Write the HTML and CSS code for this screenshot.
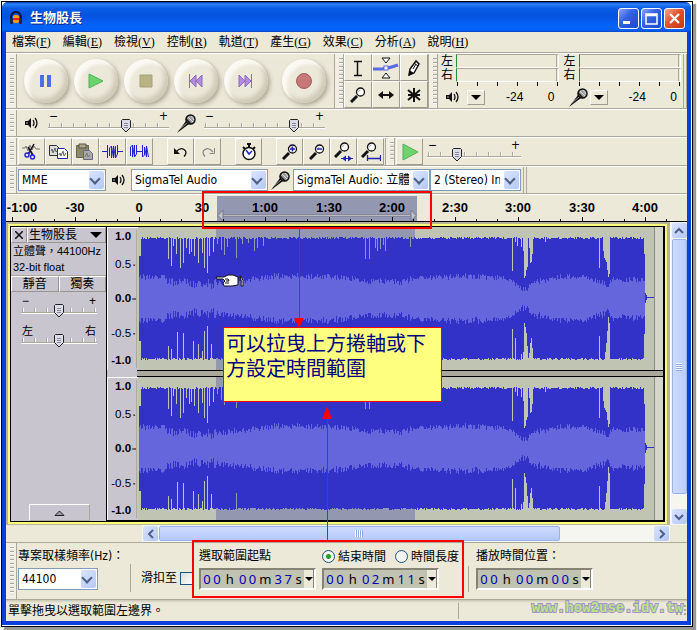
FILE: index.html
```html
<!DOCTYPE html>
<html lang="zh-Hant">
<head>
<meta charset="utf-8">
<title>生物股長</title>
<link rel="stylesheet" href="styles.css">
</head>
<body>
<svg class="sprite" aria-hidden="true">
  <symbol id="i-speaker" viewBox="0 0 14 12"><path d="M0 4h3l3-3v10l-3-3H0z" fill="#111"/><path d="M2 5v2" stroke="#aaa"/><path d="M8 3q2 3 0 6M10 1q4 5 0 10" fill="none" stroke="#111" stroke-width="1.3"/></symbol>
  <symbol id="i-mic" viewBox="0 0 19 19"><path d="M0 19L9 7l3 3z" fill="#111"/><path d="M3 15l7-6" stroke="#999"/><circle cx="13.500" cy="5.500" r="4.500" fill="#999" stroke="#111" stroke-width="1.500"/><path d="M11 3l5 5M14 2l3 4M10 6l4 4" stroke="#ddd"/><path d="M9 5l5 5" stroke="#111" stroke-width="1.500"/></symbol>
  <symbol id="i-lens" viewBox="0 0 16 16"><path d="M1 15l6-6" stroke="#111" stroke-width="3"/><circle cx="10.500" cy="5" r="4" fill="#fff" stroke="#111" stroke-width="1.300"/><path d="M8.500 5q0-2 2-2" stroke="#aaa" fill="none"/></symbol>
</svg>
<div class="window">
<div class="frame">
  <header class="titlebar">
    <svg width="14" height="14" viewBox="0 0 14 14"><path d="M2 8V6q1-5 5-5t5 5v2" fill="none" stroke="#113" stroke-width="2"/><rect x="4" y="4" width="6" height="8" rx="2" fill="#f90"/><path d="M4 8h6" stroke="#d22" stroke-width="2"/><rect x="1" y="7" width="3" height="6" rx="1" fill="#224"/><rect x="10" y="7" width="3" height="6" rx="1" fill="#224"/></svg>
    <h1>生物股長</h1>
    <button class="caption" aria-label="Minimize"><svg width="19" height="19"><path d="M4 13.500h7" stroke="#fff" stroke-width="3"/></svg></button>
    <button class="caption" aria-label="Maximize"><svg width="19" height="19"><path d="M4 5h11v10H4zM4 6.500h11" stroke="#fff" fill="none" stroke-width="1.500"/></svg></button>
    <button class="caption close" aria-label="Close"><svg width="19" height="19"><path d="M5 5l9 9M14 5l-9 9" stroke="#fff" stroke-width="2.200"/></svg></button>
  </header>

  <nav class="menubar">
    <button>檔案<span>(<u>F</u>)</span></button><button>編輯<span>(<u>E</u>)</span></button><button>檢視<span>(<u>V</u>)</span></button><button>控制<span>(<u>R</u>)</span></button><button>軌道<span>(<u>T</u>)</span></button><button>產生<span>(<u>G</u>)</span></button><button>效果<span>(<u>C</u>)</span></button><button>分析<span>(<u>A</u>)</span></button><button>說明<span>(<u>H</u>)</span></button>
  </nav>

  <section class="bar tall">
    <i class="grip"></i>
    <div class="transport">
      <button aria-label="Pause"><svg width="16" height="16"><path d="M2 2h4v12H2zM9 2h4v12H9z" fill="#4a6fe8"/></svg></button>
      <button aria-label="Play"><svg width="16" height="16"><path d="M1 1l14 7-14 7z" fill="#6bd56b" stroke="#54ad5c"/></svg></button>
      <button aria-label="Stop"><svg width="16" height="16"><path d="M2 2h12v12H2z" fill="#b9b282" stroke="#a8a27a"/></svg></button>
      <button aria-label="Start"><svg width="16" height="16"><path d="M1.500 1v14M8 2L2 8l6 6zM14 2L8 8l6 6z" fill="#b48ae0" stroke="#8c6bb8"/></svg></button>
      <button aria-label="End"><svg width="16" height="16"><path d="M13.500 1v14M1 2l6 6-6 6zM7 2l6 6-6 6z" fill="#b48ae0" stroke="#8c6bb8"/></svg></button>
      <button class="record" aria-label="Record"><svg width="16" height="16"><circle cx="8" cy="8" r="7.500" fill="#c87878" stroke="#a55c5c"/></svg></button>
    </div>
    <i class="grip"></i>
    <div class="tools">
      <button aria-label="Selection"><svg width="18" height="18"><path d="M5 2.500h3.500v14H5M13 2.500H9M13 16.500H9" fill="none" stroke="#111" stroke-width="1.500"/></svg></button>
      <button aria-label="Envelope"><svg width="26" height="22"><path d="M0 12h9q8-1 16-4" stroke="#5a6ae0" stroke-width="3" fill="none"/><path d="M9 1h8l-4 5zM9 21h8l-4-5z" fill="#fff" stroke="#111"/><rect x="11" y="9" width="4" height="4" fill="#fff" stroke="#5a6ae0"/></svg></button>
      <button aria-label="Draw"><svg width="18" height="18"><path d="M4 16l1-6 6-8 3 3-5 9z" fill="#fff" stroke="#111" stroke-width="1.500"/><path d="M4 16l1-4 3 2zM9 4l4 3M8 10l3-5" stroke="#111"/></svg></button>
      <button aria-label="Zoom"><svg width="16" height="16"><use href="#i-lens"/></svg></button>
      <button aria-label="Time shift"><svg width="18" height="16"><path d="M3 8h12" stroke="#111" stroke-width="2"/><path d="M1 8l5-4v8zM17 8l-5-4v8z" fill="#111"/></svg></button>
      <button aria-label="Multi"><svg width="18" height="16"><path d="M9 1v14M3 3l12 10M15 3L3 13M3 8h12" stroke="#111" stroke-width="2"/></svg></button>
    </div>
    <i class="grip"></i>
    <div class="meters">
      <div class="meter play">
        <span>左</span><div class="level"></div><span>右</span><div class="level"></div>
        <div class="ticks"></div>
        <div class="scale"><svg width="14" height="12"><use href="#i-speaker"/></svg><button class="drop" aria-label="Playback meter"></button><b>-24</b><b>0</b></div>
      </div>
      <div class="meter rec">
        <span>左</span><div class="level"></div><span>右</span><div class="level"></div>
        <div class="ticks"></div>
        <div class="scale"><svg width="19" height="19"><use href="#i-mic"/></svg><button class="drop" aria-label="Record meter"></button><b>-24</b><b>0</b></div>
      </div>
    </div>
    <i class="endgrip"></i>
  </section>

  <section class="bar mixer">
    <i class="grip"></i>
    <svg class="spk" width="14" height="12"><use href="#i-speaker"/></svg>
    <label class="slider"><span><b>−</b><b>+</b></span><input type="range" value="66" aria-label="Output volume"></label>
    <svg class="mic" width="19" height="19"><use href="#i-mic"/></svg>
    <label class="slider"><span><b>−</b><b>+</b></span><input type="range" value="77" aria-label="Input volume"></label>
  </section>

  <section class="bar edit">
    <i class="grip"></i>
    <div class="group">
      <button aria-label="Cut"><svg width="21" height="18"><path d="M1 5h3l1-2 2 5 2-6 2 5 2-4 2 3h4" stroke="#777" fill="none"/><path d="M13 1L8 10M7 4l5 8" stroke="#111" stroke-width="1.500"/><path d="M9 9l-2 2M11 11v1" stroke="#22c" stroke-width="2"/><circle cx="6" cy="12" r="2" fill="none" stroke="#22c" stroke-width="1.400"/><circle cx="11.500" cy="14" r="2" fill="none" stroke="#22c" stroke-width="1.400"/></svg></button>
      <button aria-label="Copy"><svg width="21" height="18"><path d="M1.500 2.500h7l3 3v7h-10z" fill="#ddd" stroke="#333"/><path d="M3 8l1-2 1 4 2-5 1 4 2-2" stroke="#666" fill="none"/><path d="M9.500 5.500h7l3 3v7h-10z" fill="#fff" stroke="#22a"/><path d="M11 12l1-2 1 3 2-5 1 5 2-3" stroke="#666" fill="none"/></svg></button>
      <button aria-label="Paste"><svg width="21" height="18"><path d="M1.500 2.500h12v12h-12z" fill="#8a8a68" stroke="#666650"/><path d="M4 1h7v4H4z" fill="#aaa98c" stroke="#555"/><path d="M8.500 7.500h6l3 3v6h-9z" fill="#aaa" stroke="#66668a"/><path d="M10 14l2-4 1 4 2-2" stroke="#777" fill="none"/></svg></button>
      <button aria-label="Trim"><svg width="21" height="18"><path d="M0 8.500h5M16 8.500h5" stroke="#22c"/><path d="M5.500 2v13M7.500 13V5l2-2v12l2-12v12l2-12v12l2-4V2" stroke="#22c" fill="none"/></svg></button>
      <button aria-label="Silence"><svg width="21" height="18"><path d="M1.500 13V4l2-2v12l2-12v12l2-3V2M7 8.500h6M13.500 2v12l2-2V4l2 10V3l2 11" stroke="#22c" fill="none"/></svg></button>
    </div>
    <div class="group">
      <button aria-label="Undo"><svg width="18" height="16"><path d="M4 8q4-5 8-2.500t0 7" fill="none" stroke="#111" stroke-width="1.300"/><path d="M2 4v6h6z" fill="#111"/></svg></button>
      <button aria-label="Redo"><svg width="18" height="16"><path d="M14 8q-4-5-8-2.500t0 7" fill="none" stroke="#888" stroke-width="1.300"/><path d="M10.500 9.500h5V4" fill="none" stroke="#888"/></svg></button>
    </div>
    <div class="group">
      <button aria-label="Timer"><svg width="18" height="18"><path d="M7 1h4M9 1v3M3 4l2 2M15 4l-2 2" stroke="#111" stroke-width="2"/><circle cx="9" cy="10.500" r="6" fill="#fff" stroke="#111" stroke-width="1.500"/><path d="M6 7l3 4 3-3" stroke="#22c" stroke-width="1.500" fill="none"/></svg></button>
    </div>
    <div class="group zooms">
      <button aria-label="Zoom in"><svg width="16" height="16"><use href="#i-lens"/><path d="M8 5h5M10.500 2.500v5" stroke="#22a" stroke-width="1.500"/></svg></button>
      <button aria-label="Zoom out"><svg width="16" height="16"><use href="#i-lens"/><path d="M8 5h5" stroke="#22a" stroke-width="1.500"/></svg></button>
      <button aria-label="Fit selection"><svg width="20" height="20"><use href="#i-lens" width="16" height="16"/><path d="M7 16.500h12" stroke="#22a"/><path d="M8 16.500l4-3v6zM18 16.500l-4-3v6z" fill="#22a"/></svg></button>
      <button aria-label="Fit project"><svg width="20" height="20"><use href="#i-lens" width="16" height="16"/><path d="M6 16.500h13M6.500 13v6M19.500 13v6" stroke="#22a" stroke-width="1.300"/></svg></button>
    </div>
    <i class="grip"></i>
    <div class="group play"><button aria-label="Play at speed"><svg width="18" height="18"><path d="M2 1l15 8-15 8z" fill="#6bd56b" stroke="#54ad5c"/></svg></button></div>
    <label class="slider short"><span><b>−</b><b>+</b></span><input type="range" value="29" aria-label="Playback speed"></label>
  </section>

  <section class="bar devices">
    <i class="grip"></i>
    <span class="combo host"><select aria-label="Host"><option>MME</option></select></span>
    <svg class="spk" width="14" height="12"><use href="#i-speaker"/></svg>
    <span class="combo dev"><select aria-label="Output device"><option>SigmaTel Audio</option></select></span>
    <svg class="mic" width="19" height="19"><use href="#i-mic"/></svg>
    <span class="combo dev"><select aria-label="Input device"><option>SigmaTel Audio: 立體聲</option></select></span>
    <span class="combo chan"><select aria-label="Channels"><option>2 (Stereo) Input</option></select></span>
    <i class="endgrip"></i>
  </section>

  <svg class="timeline" id="timeline" height="28"></svg>

  <main class="work">
    <div class="tracks">
      <div class="track">
        <aside class="panel">
          <div class="pair head"><button class="x" aria-label="Close track"><svg width="8" height="8"><path d="M0 0l8 8M8 0L0 8" stroke="#111" stroke-width="1.500"/></svg></button><button class="name">生物股長<svg width="12" height="6"><path d="M0 0h12L6 6z"/></svg></button></div>
          <p>立體聲，44100Hz</p>
          <p>32-bit float</p>
          <div class="pair"><button>靜音</button><button>獨奏</button></div>
          <label class="slider small"><span><b>−</b><b>+</b></span><input type="range" value="50" aria-label="Gain"></label>
          <label class="slider small pan"><span><b>左</b><b>右</b></span><input type="range" value="50" aria-label="Pan"></label>
          <button class="fold" aria-label="Collapse"><svg width="11" height="6"><path d="M1 5.500h9L5.500 1z" fill="#99a" stroke="#222"/></svg></button>
        </aside>
        <div class="channels">
          <div class="channel"><svg class="vruler" width="31" viewBox="0 0 31 143"></svg><svg class="wave" viewBox="0 0 525 143" preserveAspectRatio="none"></svg></div>
          <div class="divider"></div>
          <div class="channel"><svg class="vruler" width="31" viewBox="0 0 31 143"></svg><svg class="wave" viewBox="0 0 525 143" preserveAspectRatio="none"></svg></div>
        </div>
      </div>
    </div>
    <div class="scroll vert"><button aria-label="Up"><svg width="10" height="10"><path d="M1 7l4-4 4 4" /></svg></button><div class="thumb"></div><div class="space"></div><button aria-label="Down"><svg width="10" height="10"><path d="M1 3l4 4 4-4"/></svg></button></div>
    <div class="scroll horz"><button aria-label="Left"><svg width="10" height="10"><path d="M7 1L3 5l4 4"/></svg></button><div class="thumb"></div><div class="space"></div><button aria-label="Right"><svg width="10" height="10"><path d="M3 1l4 4-4 4"/></svg></button></div>
  </main>

  <section class="bar selection">
    <i class="grip"></i>
    <div class="field rate"><label for="rate">專案取樣頻率(Hz)：</label><span class="combo"><select id="rate"><option>44100</option></select></span></div>
    <div class="snap"><label for="snap">滑扣至</label><input id="snap" type="checkbox"></div>
    <div class="field start"><span>選取範圍起點</span><div class="time" data-time="00h00m37s"></div></div>
    <div class="field end"><div class="radios"><label><input type="radio" name="mode" checked>結束時間</label><label><input type="radio" name="mode">時間長度</label></div><div class="time" data-time="00h02m11s"></div></div>
    <div class="field pos"><span>播放時間位置：</span><div class="time" data-time="00h00m00s"></div></div>
  </section>

  <footer class="status"><span>單擊拖曳以選取範圍左邊界。</span><i></i><svg width="12" height="12"><path d="M9 1h2M5 5h2M9 5h2M1 9h2M5 9h2M9 9h2" stroke="#aaa795" stroke-width="2"/></svg></footer>
</div>
</div>

<div class="mark ruler-mark"></div>
<div class="mark time-mark"></div>
<svg class="arrow down" width="10" height="99"><path d="M5.500 0v90" stroke="red"/><path d="M0 89h10L5 99z" fill="red"/></svg>
<svg class="arrow up" width="10" height="134"><path d="M5.500 12v122" stroke="red"/><path d="M0 13h10L5 0z" fill="red"/></svg>
<svg class="hand" width="29" height="14"><path d="M1 3h8l4-2h5l5 2v8l-6 1H9l-1-3 2-2-2-2H2z" fill="#fff" stroke="#111"/><path d="M10 5h3l1 2h-3M10 9h4" fill="none" stroke="#111"/><path d="M25 2q2 5 1 10h2q1-6-2-10z" fill="#fff" stroke="#111"/></svg>
<div class="note">可以拉曳上方捲軸或下方設定時間範圍</div>
<div class="site">www.how2use.idv.tw</div>
<script src="app.js"></script>
</body>
</html>
```
FILE: styles.css
```css
* { box-sizing: border-box; }
body {
  margin: 0;
  position: relative;
  background: #fff;
  color: #000;
  font: 12px/14px "DejaVu Sans Condensed", "Noto Sans CJK TC", sans-serif;
  overflow: hidden;
}
button, select, input { font: inherit; color: inherit; margin: 0; padding: 0; }
button { border: 0; background: none; }
svg { display: block; flex: none; }
.sprite { position: absolute; width: 0; height: 0; }

.window {
  display: flex;
  min-height: calc(100vh - 5px);
  margin: 1px 4px 4px 1px;
  border: 1px solid #000;
  padding: 0 1px 1px 0;
  background: #fff;
  box-shadow: 3px 3px 1px #999;
}
.frame {
  flex: 1;
  min-width: 0;
  display: flex;
  flex-direction: column;
  padding: 0 4px 4px;
  background: #0a3fdc;
  border-radius: 6px 6px 0 0;
}
.titlebar {
  display: flex;
  align-items: center;
  gap: 2px;
  height: 30px;
  margin: 0 -4px;
  padding: 2px 6px 0 7px;
  border-radius: 6px 6px 0 0;
  background: linear-gradient(#0831b8, #2b83f5 2px, #0a5ce6 6px, #0453e0 14px, #0563f8 24px, #0462fa 28px, #0345c8);
}
.titlebar h1 {
  flex: 1;
  margin: 0 0 0 5px;
  color: #fff;
  font-size: 13px;
  font-weight: 700;
  text-shadow: 1px 1px #0b2580;
}
.caption {
  display: grid;
  place-items: center;
  width: 21px;
  height: 21px;
  border: 1px solid #fff;
  border-radius: 3px;
  background: linear-gradient(135deg, #8ca8f4, #3563e2 40%, #1c48cc);
}
.caption.close { background: linear-gradient(135deg, #f0a890, #e0542e 45%, #c03810); }

.menubar {
  display: flex;
  gap: 12px;
  height: 21px;
  padding: 0 6px 1px;
  background: #ece9d8;
  border-bottom: 1px solid #aca899;
}
.menubar button { white-space: nowrap; }
.menubar span { font-family: "Liberation Serif", serif; }

.bar {
  display: flex;
  align-items: center;
  min-height: 28px;
  background: #ece9d8;
  border-top: 1px solid #fff;
  border-bottom: 1px solid #aca899;
}
.tall { min-height: 56px; }
.grip {
  align-self: stretch;
  flex: none;
  width: 11px;
  border: solid #aca899;
  border-width: 0 1px 0 0;
  background: repeating-linear-gradient(#aca899 0 1px, #fff 1px 2px, #ece9d8 2px 4px) 4px 4px / 4px calc(100% - 8px) no-repeat, #f2f0e5;
}
.endgrip {
  align-self: stretch;
  width: 4px;
  border: solid #aca899;
  border-width: 0 1px;
}
.bar > .grip ~ .grip { border-left: 1px solid #aca899; width: 10px; }

.transport { display: flex; gap: 6px; padding: 0 8px 0 7px; background: #ebe7d9; }
.transport button {
  display: grid;
  place-items: center;
  width: 44px;
  height: 44px;
  border-radius: 50%;
  background: #ece9db;
  box-shadow: inset 5px 5px 3px #faf9f2, inset -4px -4px 4px #cfcab8, 2px 2px 4px #aaa592;
}
.transport .record { margin-left: 8px; }

.tools {
  display: grid;
  grid-template-columns: repeat(3, 28px);
  grid-auto-rows: 27px;
}
.tools button, .group button, .drop {
  display: grid;
  place-items: center;
  overflow: hidden;
  border: 1px solid;
  border-color: #fff #9f9c8e #9f9c8e #fff;
}

.meters { flex: 1; display: flex; }
.meter {
  flex: 1;
  display: grid;
  grid-template-columns: 16px 1fr;
  grid-template-rows: 14px 14px 4px 22px;
  padding-left: 2px;
}
.meter span { line-height: 14px; padding-left: 1px; }
.level {
  border: 1px solid #fff;
  border-top-color: #aca899;
  border-left-color: #2a8a3a;
  margin-right: 2px;
  background: linear-gradient(#aca899, #aca899) calc(100% - 1px) 0 / 1px 100% no-repeat;
}
.rec .level { border-left-color: #a04040; }
.ticks {
  grid-column: 2;
  margin-right: 3px;
  background: repeating-linear-gradient(to left, #111 0 1px, transparent 1px 20px);
}
.scale { grid-column: 1 / 3; display: flex; align-items: center; padding: 0 6px 0 6px; }
.scale b { font-weight: 400; font-family: "Liberation Sans", sans-serif; }
.scale b:last-child { margin-left: auto; }
.drop { width: 18px; height: 15px; margin: 0 21px 0 7px; }
.rec .drop { margin-left: 2px; }
.drop::after { content: ""; border: 5px solid transparent; border-top-color: #000; border-bottom: 0; }

.slider { display: flex; flex-direction: column; width: 121px; }
.slider span { display: flex; justify-content: space-between; padding: 0 1px; height: 6px; line-height: 6px; }
.slider b { font-weight: 400; }
.slider input {
  appearance: none;
  width: 100%;
  height: 14px;
  background:
    linear-gradient(#aca899, #aca899) 0 8px / 100% 1px no-repeat,
    linear-gradient(#fff, #fff) 0 9px / 100% 1px no-repeat,
    repeating-linear-gradient(to right, #aca899 0 1px, #fff 1px 2px, transparent 2px 12px) 1px 4px / 100% 4px no-repeat;
}
.slider input::-webkit-slider-thumb {
  appearance: none;
  width: 12px;
  height: 14px;
  background: url("data:image/svg+xml,%3Csvg xmlns='http://www.w3.org/2000/svg' width='12' height='14'%3E%3Cpath d='M2.500.5h7l1 1v7L6 13 1.500 8.500v-7z' fill='%23dcdce8' stroke='%23222'/%3E%3Cpath d='M4 4.500h4M4 6.500h4M4 8.500h4' stroke='%23889'/%3E%3C/svg%3E");
}
.spk { margin: 0 9px; }
.mixer .mic { margin: 0 8px 0 8px; }
.mixer .spk { margin: 0 9px 0 8px; }
.short { width: 94px; margin-left: 4px; }

.group { display: flex; margin-right: 14px; }
.group button { width: 27px; height: 27px; }
.edit .grip + .group { margin-left: 1px; }
.zooms { margin-right: 1px; }
.edit .play { margin-right: 0; }

.combo { position: relative; display: block; height: 22px; flex: none; }
.combo select {
  appearance: none;
  width: 100%;
  height: 100%;
  padding: 0 20px 0 3px;
  border: 1px solid #7f9db9;
  border-radius: 0;
  background: #fff;
  text-overflow: clip;
}
.combo::before, .combo::after { content: ""; position: absolute; pointer-events: none; }
.combo::before { z-index: 1; right: 2px; top: 2px; bottom: 2px; width: 15px; border-radius: 2px; background: linear-gradient(135deg, #dbe5fe, #b4c8f6); }
.combo::after { z-index: 2; right: 7px; top: 6px; width: 6px; height: 6px; border: solid #4d6185; border-width: 0 2px 2px 0; transform: rotate(45deg); }
.host { width: 88px; margin-left: 1px; }
.devices .spk { margin: 0 5px 0 6px; }
.dev { width: 137px; }
.devices .mic { margin: 0 3px; }
.chan { width: 91px; margin-right: 2px; }

.timeline { width: 100%; background: #ece9d8; border-top: 1px solid #fff; border-bottom: 1px solid #000; font: bold 13px "Liberation Sans", sans-serif; }

.work {
  flex: 1;
  display: grid;
  grid-template-columns: 1fr 17px;
  grid-template-rows: 1fr 17px;
  background: #ece9d8;
}
.tracks { display: flex; padding: 2px 3px 1px 2px; background: #b8b597; }
.track { flex: 1; display: flex; border: 2px solid #fdfd7c; }
.panel {
  width: 97px;
  display: flex;
  flex-direction: column;
  border: solid #000;
  border-width: 1px;
  background: #c9c5cf;
  font-family: "Liberation Sans", "Noto Sans CJK TC", sans-serif;
}
.panel p { margin: 0; padding: 0 2px; line-height: 16px; white-space: nowrap; font-size: 11px; }
.panel p:nth-of-type(2) { border-bottom: 1px solid #aca899; }
.pair { display: flex; }
.pair button { flex: 1; height: 16px; line-height: 13px; border: 1px solid; border-color: #fff #99968f #99968f #fff; }
.pair .x { flex: none; width: 16px; display: grid; place-items: center; }
.pair .name { display: flex; align-items: center; justify-content: space-between; padding: 0 3px 0 1px; }
.slider.small { width: 76px; margin: 7px auto 0 10px; }
.small span { height: 5px; line-height: 5px; }
.small.pan { margin-top: 11px; }
.small.pan span { font-size: 11px; }
.fold { width: 61px; height: 17px; margin: auto auto 0 18px; display: grid; place-items: center; border: 1px solid; border-color: #fff #aca899 #aca899 #fff; }

.channels { flex: 1; min-width: 0; display: flex; flex-direction: column; border: solid #000; border-width: 1px 2px 2px 0; background: #c9c5cf; }
.channel { flex: 1; min-height: 0; display: flex; }
.vruler { height: 100%; background: #c9c5cf; border: solid #fff; border-width: 1px 0 0 1px; font: 12px "Liberation Sans", sans-serif; }
.vruler .strong { font-weight: 700; }
.wave { flex: 1; min-width: 0; width: 0; height: 100%; background: #c0c4b2; }
.divider { height: 7px; margin-left: 30px; border: solid #000; border-width: 1px 0; background: #aaa79b; }

.scroll { display: flex; background: #f6f6f1; }
.scroll button { flex: none; width: 15px; height: 15px; display: grid; place-items: center; border-radius: 2px; background: linear-gradient(135deg, #d8e4ff, #b4c8f6); }
.scroll path { fill: none; stroke: #4d6185; stroke-width: 2; }
.vert { grid-row: 1; grid-column: 2; flex-direction: column; align-items: center; gap: 1px; padding: 1px 0; border-left: 1px solid #fff; }
.vert .thumb, .horz .thumb { border: 1px solid #98b4e8; border-radius: 2px; }
.vert .thumb { flex: 255; width: 15px; background: linear-gradient(to right, #cddcff, #bacdfb); display: grid; place-items: center; }
.vert .space { flex: 13; }
.horz { grid-column: 1; margin-left: 136px; align-items: center; gap: 1px; padding: 0 1px; }
.horz .thumb { flex: 401; height: 15px; background: linear-gradient(#cddcff, #b4c8f8); display: grid; place-items: center; }
.horz .space { flex: 93; }
.vert .thumb::after { content: ""; width: 6px; height: 8px; background: repeating-linear-gradient(#fff 0 1px, #8caae0 1px 2px); }
.horz .thumb::after { content: ""; width: 8px; height: 7px; background: repeating-linear-gradient(to right, #fff 0 1px, #8caae0 1px 2px); }

.selection { min-height: 58px; align-items: flex-start; border-top-color: #aca899; }
.field { display: flex; flex-direction: column; gap: 4px; padding-top: 6px; white-space: nowrap; }
.field > label, .field > span:first-child { line-height: 15px; }
.rate { width: 112px; padding-left: 1px; }
.rate .combo { width: 80px; }
.snap { display: flex; align-items: center; gap: 3px; margin-top: 21px; height: 28px; padding-left: 10px; border-left: 1px solid #aca899; margin-left: 1px; }
.snap input { appearance: none; width: 13px; height: 13px; border: 1px solid #1c5180; background: linear-gradient(135deg, #dcdcd7, #fff); }
.start { margin-left: 6px; width: 123px; }
.radios { display: flex; gap: 9px; height: 15px; }
.radios label { display: flex; align-items: center; gap: 3px; }
.radios input { appearance: none; width: 13px; height: 13px; border: 1px solid #1c5180; border-radius: 50%; background: #f4f4f0; }
.radios input:checked { background: radial-gradient(#21a121 0 2px, #f4f4f0 3px); }
.end { width: 146px; }
.pos { position: relative; padding-left: 8px; }
.pos::before { content: ""; position: absolute; left: 0; top: 23px; height: 26px; border-left: 1px solid #aca899; }
.time {
  display: flex;
  align-items: center;
  width: 117px;
  height: 22px;
  padding-left: 1px;
  border: 2px solid;
  border-color: #858376 #fff #fff #858376;
  background: #c0c3b1;
  font-family: "Noto Sans", sans-serif;
}
.time span { width: 10px; text-align: center; color: #0000b8; font-size: 13px; }
.time .unit { width: 16px; color: #000; }
.time .unit:nth-last-child(2) { width: 11px; }
.time button { align-self: stretch; width: 10px; margin-left: auto; display: grid; place-items: center; background: #ece9d8; border-right: 1px solid #858376; }
.time button::after { content: ""; border: 4px solid transparent; border-top-color: #000; border-bottom: 0; }

.status { display: flex; align-items: center; height: 21px; padding-left: 2px; background: linear-gradient(#c9c6b8, #ece9d8 3px); }
.status span { flex: 1; }
.status i { width: 229px; height: 16px; border-left: 1px solid #aca899; margin-right: -12px; }

.mark { position: absolute; border: 2px solid red; }
.ruler-mark { left: 202px; top: 191px; width: 230px; height: 38px; }
.time-mark { left: 192px; top: 540px; width: 272px; height: 58px; }
.arrow { position: absolute; }
.arrow.down { left: 294px; top: 229px; }
.arrow.up { left: 322px; top: 406px; }
.hand { position: absolute; left: 215px; top: 274px; }
.note {
  position: absolute;
  left: 223px;
  top: 327px;
  width: 219px;
  height: 75px;
  padding: 2px 10px 0 2px;
  border: 1px solid #ff0000;
  background: #ffff7f;
  color: #000080;
  font: 20px/25px "Noto Sans CJK TC", sans-serif;
}
.site {
  position: absolute;
  right: 14px;
  bottom: 14px;
  color: #b9e583;
  font: bold 14px/18px "Liberation Mono", monospace;
  -webkit-text-stroke: 2px #a492cc;
  paint-order: stroke fill;
}
```
FILE: app.js
```js
(() => {
// Time ruler: 30 s per major division, labels centred on their ticks.
const labels = ["-1:00", "-30", "0", "30", "1:00", "1:30", "2:00", "2:30", "3:00", "3:30", "4:00"];
const step = 63.3;
let out = '<rect x="211" y="1" width="200" height="25" fill="#9497b0"/>' +
  '<path d="M214 20.5h190" stroke="#77778c" stroke-width="2"/><path d="M214 20.500h190" stroke="#bbb"/>' +
  '<path d="M217 15v11l-5-5.500zM405 15v11l5-5.500z" fill="#c4c4cc" stroke="#77778c"/>';
labels.forEach((text, i) => {
  const x = Math.round(6 + i * step);
  out += `<text x="${i ? x : 16}" y="17" text-anchor="middle">${text}</text>`;
  for (let k = 0; k < 3; k++) {
    const tx = Math.round(x + k * step / 3) + 0.5;
    out += `<path d="M${tx} ${k ? 24 : 22}V26" stroke="#000"/>`;
  }
});
document.getElementById("timeline").innerHTML = out;

// Amplitude rulers
document.querySelectorAll(".vruler").forEach(svg => {
  svg.innerHTML = [["1.0", 11, 1], ["0.5", 39, 0], ["0.0", 75, 1], ["-0.5", 111, 0], ["-1.0", 139, 1]]
    .map(([t, y, s]) => `<text x="24" y="${y}" text-anchor="end" class="${s ? "strong" : ""}">${t}</text>`).join("") +
    '<path d="M26 36.500h2M25 71.500h4M26 107.500h2" stroke="#000"/><path d="M29.500 0v143" stroke="#aca899"/>';
});

// Peaks that fall short of full scale: x -> height in px above / below the centre line
const above = {30:39,33:32,35:52,38:44,42:30,45:35,48:50,51:44,53:46,56:42,60:35,64:45,66:30,69:25,71:42,75:46,79:54,
  83:48,86:43,89:51,98:40,104:54,110:55,116:47,119:50,125:52,227:39,231:39,237:50,239:47,242:49,245:53,247:47,272:51,
  374:27,377:56,379:52,383:51,385:47,386:20,387:22,388:28,389:31,391:50,392:35,393:36,394:44,407:56,461:30,465:47,466:40,467:38,468:36,469:28,470:21,471:24};
const below = {30:47,33:50,39:33,45:34,55:42,60:45,64:52,66:32,69:27,73:45,98:44,374:30,377:39,383:55,385:53,386:24,387:28,388:34,
  389:47,391:54,392:44,393:39,394:49,461:37,467:53,468:44,469:32,470:18,471:24};
const rms = [[1,21],[27,21],[30,15],[50,16],[68,13],[80,16],[105,17],[137,22],[190,22],[214,19],[227,16],[242,17],[262,16],[277,20],
  [332,22],[372,19],[376,14],[386,8],[392,12],[397,16],[412,18],[422,22],[452,20],[461,17],[467,14],[470,12],[473,18],[506,19]];
let seed = 7;
const rand = () => (seed = (seed * 1103515245 + 12345) % 2147483648) / 2147483648;
const envelope = x => {
  const i = Math.max(1, rms.findIndex(p => p[0] >= x));
  const [a, b] = [rms[i - 1], rms[i]];
  return a[1] + (b[1] - a[1]) * (x - a[0]) / (b[0] - a[0]);
};
let peak = "", body = "";
for (let x = 1; x < 507; x++) {
  const edge = x < 3 ? 41 : 59;
  const t = Math.min(above[x] || edge + Math.round(rand() * 2), x === 506 ? 44 : 99);
  const b = Math.min(below[x] || edge + Math.round(rand() * 2), x === 506 ? 35 : 99);
  peak += `M${x} ${71 - t}h1V${72 + b}h-1z`;
  const busy = x > 28 && x < 80 ? 11 : 6;
  const e = envelope(x) + (rand() - 0.5) * busy;
  body += `M${x} ${71 - Math.round(Math.min(e, t))}h1V${72 + Math.round(Math.min(e + rand() * 2 - 1, b))}h-1z`;
}
document.querySelectorAll(".wave").forEach(svg => {
  svg.innerHTML = '<rect x="78" width="199" height="143" fill="#9497b0"/>' +
    '<rect x="516" width="9" height="143" fill="#d4d6c9"/><path d="M516.500 0v143" stroke="#888"/>' +
    `<g shape-rendering="crispEdges"><path d="${peak}M507 66h1l1 4h7v1h-7l-1 5h-1z" fill="#3232c8"/><path d="${body}" fill="#6565dc"/></g>`;
});

// Time fields
document.querySelectorAll(".time").forEach(el => {
  el.innerHTML = [...el.dataset.time].map(c => `<span class="${/\d/.test(c) ? "" : "unit"}">${c}</span>`).join("") +
    '<button aria-label="Format"></button>';
});
})();
```
